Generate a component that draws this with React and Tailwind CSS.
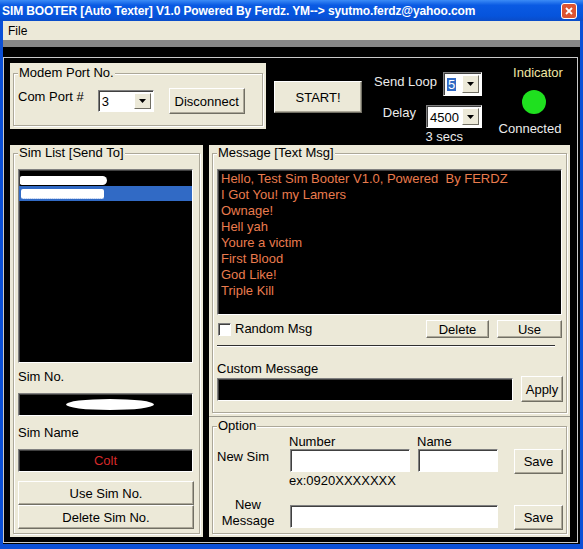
import React from 'react';

const beige = 'bg-[#ece9d8]';

function Btn({ className = '', children }) {
  return (
    <button
      type="button"
      className={`flex items-center justify-center bg-[#ece9d8] border border-t-white border-l-white border-r-[#716f64] border-b-[#716f64] shadow-[inset_-1px_-1px_0_#aca899] text-[13px] leading-none text-black ${className}`}
    >
      {children}
    </button>
  );
}

function Sunken({ className = '', children }) {
  return (
    <div className={`border border-t-[#808080] border-l-[#808080] border-r-white border-b-white shadow-[inset_1px_1px_0_#404040] ${className}`}>
      {children}
    </div>
  );
}

function Combo({ className = '', children }) {
  return (
    <Sunken className={`bg-white flex items-stretch ${className}`}>
      <div className="flex-1 flex items-center pl-[3px] pt-[1px] text-[13px] leading-none text-black">{children}</div>
      <div className="w-[17px] my-[2px] mr-[2px] bg-[#ece9d8] border border-t-white border-l-white border-r-[#716f64] border-b-[#716f64] flex items-center justify-center">
        <svg width="7" height="4" viewBox="0 0 7 4"><path d="M0 0h7L3.5 4z" fill="#000" /></svg>
      </div>
    </Sunken>
  );
}

function GroupBox({ label, className = '', children }) {
  return (
    <div className={`relative h-full border border-[#aca899] shadow-[inset_1px_1px_0_#fff,1px_1px_0_#fff] ${className}`}>
      <span className="absolute left-[4px] -top-[8px] bg-[#ece9d8] px-[1px] leading-[14px] text-[13px] text-black whitespace-nowrap">
        {label}
      </span>
      {children}
    </div>
  );
}

const messages = [
  'Hello, Test Sim Booter V1.0, Powered  By FERDZ',
  'I Got You! my Lamers',
  'Ownage!',
  'Hell yah',
  'Youre a victim',
  'First Blood',
  'God Like!',
  'Triple Kill',
];

export default function App() {
  return (
    <div className="w-[583px] h-[549px] bg-[#0b4fd6] flex flex-col overflow-hidden font-['Liberation_Sans',Arial,sans-serif] text-[13px] text-black">
      {/* title bar */}
      <div className="h-[21px] flex items-center justify-between pl-[2px] pr-[6px] bg-[linear-gradient(to_bottom,#3b8bf6,#0a5ae3_25%,#0654dc_75%,#0a4cc8)]">
        <span className="text-white font-bold text-[12px] whitespace-nowrap tracking-[-0.1px]">
          SIM BOOTER [Auto Texter] V1.0 Powered By Ferdz. YM--&gt; syutmo.ferdz@yahoo.com
        </span>
        <div className="w-[16px] h-[16px] rounded-[3px] border border-white bg-[#dc5432] flex items-center justify-center">
          <svg width="8" height="8" viewBox="0 0 8 8">
            <path d="M1 1l6 6M7 1L1 7" stroke="#fff" strokeWidth="1.8" />
          </svg>
        </div>
      </div>

      <div className="mx-[3px] flex-1 flex flex-col mb-[5px]">
        {/* menu */}
        <div className={`h-[19px] ${beige} flex items-center pl-[5px] text-[12px]`}>File</div>
        <div className="h-[7px] bg-[#878787]" />

        <div className="flex-1 bg-black pt-[10px] pr-[2px] pb-[1px]">
          <div className="h-full border border-[#c9c9c9] pl-[6px] pt-[5px] flex flex-col">
            {/* top row */}
            <div className="h-[66px] flex items-start">
              <div className={`w-[256px] h-[66px] ${beige} p-[3px] pt-[10px]`}>
                <GroupBox label="Modem Port No.">
                  <div className="flex items-center h-[26px] mt-[14px] pl-[4px]">
                    <span className="mb-[8px] leading-[14px] whitespace-nowrap">Com Port #</span>
                    <Combo className="w-[56px] h-[22px] ml-[14px]">3</Combo>
                    <Btn className="w-[76px] h-[26px] ml-[15px]">Disconnect</Btn>
                  </div>
                </GroupBox>
              </div>

              <Btn className="w-[88px] h-[32px] ml-[8px] mt-[18px]">START!</Btn>

              <div className="w-[105px] ml-[15px] flex flex-col items-end text-[#ececec]">
                <div className="flex items-center mt-[9px]">
                  <span className="mb-[5px] leading-[14px] whitespace-nowrap">Send Loop</span>
                  <Combo className="w-[39px] h-[24px] ml-[6px]">
                    <span className="bg-[#316ac5] text-white px-[1px] outline-1 outline-dotted outline-[#fff]">5</span>
                  </Combo>
                </div>
                <div className="flex items-center mt-[9px]">
                  <span className="mb-[7px] leading-[14px]">Delay</span>
                  <Combo className="w-[56px] h-[23px] ml-[10px]">4500</Combo>
                </div>
                <span className="self-end mr-[19px] mt-[2px] leading-[14px] whitespace-nowrap">3 secs</span>
              </div>

              <div className="w-[64px] ml-[20px] flex flex-col items-center">
                <span className="mt-[3px] ml-[8px] leading-[14px] text-[#f0e7a4]">Indicator</span>
                <div className="mt-[10px] w-[24px] h-[24px] rounded-full bg-[#1fe01f]" />
                <span className="mt-[8px] leading-[14px] text-[#ececec] -ml-[8px]">Connected</span>
              </div>
            </div>

            {/* main row */}
            <div className="mt-[16px] flex gap-[6px]">
              {/* sim list */}
              <div className={`w-[193px] h-[392px] ${beige} p-[3px] pt-[8px]`}>
                <GroupBox label="Sim List [Send To]">
                  <div className="pl-[4px] pt-[15px] flex flex-col">
                    <Sunken className="w-[175px] h-[194px] bg-black">
                      <div className="h-[16px] flex items-center pl-[1px]">
                        <div className="w-[87px] h-[9px] mt-[5px] bg-white rounded-l-[2px] rounded-r-[5px]" />
                      </div>
                      <div className="h-[15px] bg-[#316ac5] flex items-center pl-[2px]">
                        <div className="w-[83px] h-[10px] bg-white rounded-[2px] border-b border-dotted border-[#9db8e8]" />
                      </div>
                    </Sunken>
                    <span className="mt-[7px] leading-[14px]">Sim No.</span>
                    <Sunken className="mt-[9px] w-[175px] h-[23px] bg-black flex items-center justify-center">
                      <div className="ml-[9px] w-[88px] h-[11px] bg-white rounded-[50%]" />
                    </Sunken>
                    <span className="mt-[10px] leading-[14px]">Sim Name</span>
                    <Sunken className="mt-[9px] w-[175px] h-[23px] bg-black flex items-center justify-center">
                      <span className="text-[#d42a2a] leading-none">Colt</span>
                    </Sunken>
                    <Btn className="mt-[9px] w-[176px] h-[24px]">Use Sim No.</Btn>
                    <Btn className="w-[176px] h-[24px]">Delete Sim No.</Btn>
                  </div>
                </GroupBox>
              </div>

              {/* right column */}
              <div className="w-[361px] h-[392px] flex flex-col">
                <div className={`h-[271px] ${beige} p-[3px] pt-[8px]`}>
                  <GroupBox label="Message [Text Msg]">
                    <div className="pl-[4px] pt-[15px] flex flex-col">
                      <Sunken className="w-[345px] h-[146px] bg-black pl-[3px] pt-[1px]">
                        {messages.map((m) => (
                          <div key={m} className="leading-[16px] text-[#ea7c4e] whitespace-pre">{m}</div>
                        ))}
                      </Sunken>
                      <div className="w-[345px] h-[18px] mt-[5px] flex items-center">
                        <Sunken className="ml-[1px] w-[13px] h-[13px] bg-white" />
                        <span className="ml-[4px] leading-[14px]">Random Msg</span>
                        <Btn className="ml-auto w-[63px] h-[18px]">Delete</Btn>
                        <Btn className="ml-[8px] w-[65px] h-[18px]">Use</Btn>
                      </div>
                      <div className="mt-[7px] w-[338px] h-[1px] bg-[#303030] shadow-[0_1px_0_#fff]" />
                      <span className="mt-[16px] leading-[14px]">Custom Message</span>
                      <div className="flex items-center h-[26px]">
                        <Sunken className="w-[296px] h-[23px] bg-black" />
                        <Btn className="ml-[8px] w-[42px] h-[26px]">Apply</Btn>
                      </div>
                    </div>
                  </GroupBox>
                </div>

                <div className={`flex-1 ${beige} border-t border-[#9d9b8f] px-[3px] pt-[9px] pb-[3px]`}>
                  <GroupBox label="Option">
                    <div className="flex">
                      <span className="w-[76px] pl-[4px] mt-[23px] leading-[14px]">New Sim</span>
                      <div className="flex flex-col">
                        <div className="flex mt-[8px] leading-[14px]">
                          <span className="w-[128px]">Number</span>
                          <span>Name</span>
                        </div>
                        <div className="flex">
                          <Sunken className="ml-[1px] w-[120px] h-[23px] bg-white" />
                          <Sunken className="ml-[8px] w-[80px] h-[23px] bg-white" />
                        </div>
                        <span className="mt-[2px] leading-[14px]">ex:0920XXXXXXX</span>
                      </div>
                      <Btn className="ml-[16px] mt-[22px] w-[49px] h-[25px]">Save</Btn>
                    </div>
                    <div className="flex items-start mt-[9px]">
                      <span className="w-[70px] text-center leading-[16px]">
                        New
                        <br />
                        Message
                      </span>
                      <Sunken className="ml-[7px] mt-[8px] w-[208px] h-[23px] bg-white" />
                      <Btn className="ml-[16px] mt-[8px] w-[49px] h-[25px]">Save</Btn>
                    </div>
                  </GroupBox>
                </div>
              </div>
            </div>
          </div>
        </div>
      </div>
    </div>
  );
}
